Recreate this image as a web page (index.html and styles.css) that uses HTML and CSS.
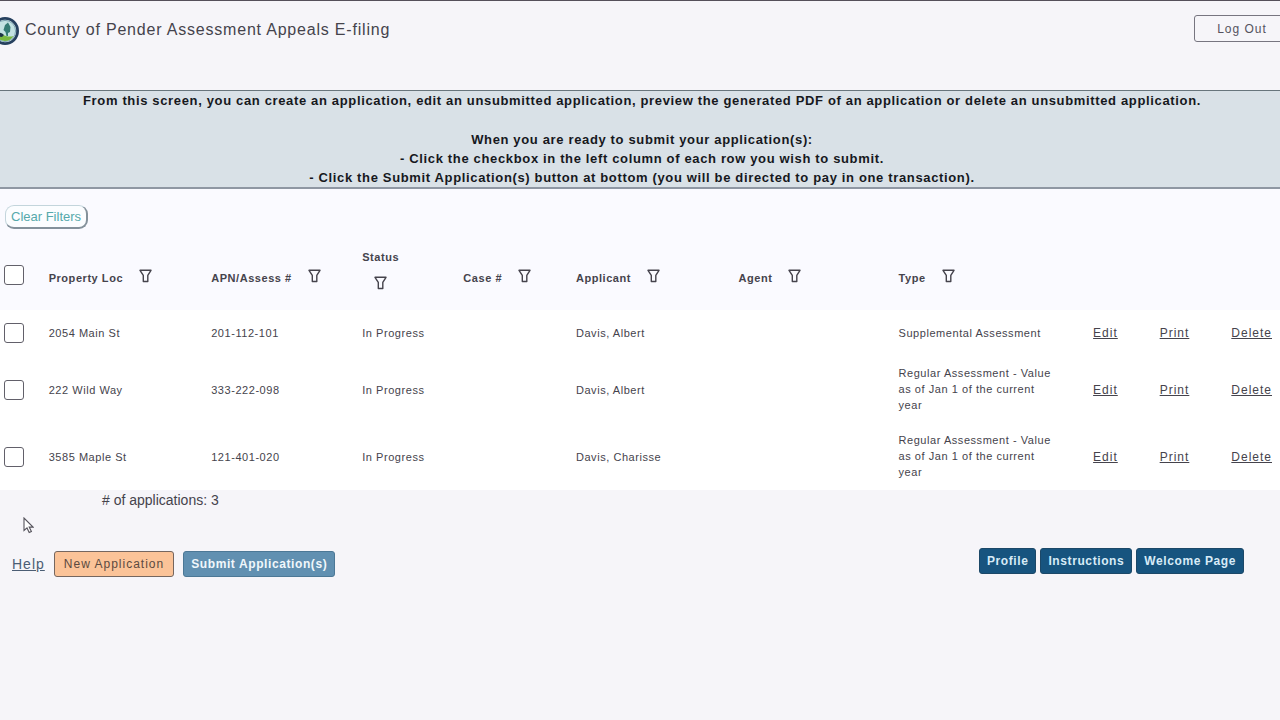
FILE: index.html
```html
<!DOCTYPE html>
<html lang="en">
<head>
    <meta charset="UTF-8">
    <meta name="viewport" content="width=device-width, initial-scale=1.0">
    <title>Assessment Appeals E-filing</title>
    <link rel="stylesheet" href="styles.css">
</head>
<body>
    <svg class="sprite" aria-hidden="true">
        <symbol id="funnel" viewBox="0 0 13 14">
            <path d="M1 1.300h11L8.800 6.400v6.100H4.300V6.400z" fill="none" stroke="currentColor" stroke-width="1.4" stroke-linejoin="round"/>
        </symbol>
    </svg>

    <header class="header">
        <svg class="logo" viewBox="0 0 28 28" aria-hidden="true">
            <circle cx="14" cy="14" r="12.6" fill="#dcefea" stroke="#26405f" stroke-width="2.8"/>
            <circle cx="14" cy="14" r="10.6" fill="#c3e2e2" stroke="#7fa5b4" stroke-width="1"/>
            <path d="M5 19q6-2 10 0q4 1 7.500 0q-3 5-8.500 5q-6-.2-9-5z" fill="#79b83f"/>
            <path d="M4 15.500q6-.5 9 2.500l-2 2q-4 0-6.500-2z" fill="#1d3545"/>
            <path d="M15.500 19l-1-4l-2-2l1.500-5l3-2.500l2.500 4.500l-.5 5l-2 1v3z" fill="#347b73"/>
        </svg>
        <h1>County of Pender Assessment Appeals E-filing</h1>
        <button type="button" class="logout">Log Out</button>
    </header>

    <section class="notice">
        <p>From this screen, you can create an application, edit an unsubmitted application, preview the generated PDF of an application or delete an unsubmitted application.</p>
        <p>When you are ready to submit your application(s):<br>
        - Click the checkbox in the left column of each row you wish to submit.<br>
        - Click the Submit Application(s) button at bottom (you will be directed to pay in one transaction).</p>
    </section>

    <main>
        <div class="filters">
            <button type="button" class="clear">Clear Filters</button>
        </div>

        <table>
            <colgroup>
                <col class="col-check">
                <col class="col-property">
                <col class="col-apn">
                <col class="col-status">
                <col class="col-case">
                <col class="col-applicant">
                <col class="col-agent">
                <col class="col-type">
                <col class="col-edit">
                <col class="col-print">
                <col class="col-delete">
            </colgroup>
            <thead>
                <tr>
                    <th><input type="checkbox" aria-label="Select all"></th>
                    <th><span class="head">Property Loc <svg class="funnel"><use href="#funnel"/></svg></span></th>
                    <th><span class="head">APN/Assess # <svg class="funnel"><use href="#funnel"/></svg></span></th>
                    <th><span class="head stacked">Status <svg class="funnel"><use href="#funnel"/></svg></span></th>
                    <th><span class="head">Case # <svg class="funnel"><use href="#funnel"/></svg></span></th>
                    <th><span class="head">Applicant <svg class="funnel"><use href="#funnel"/></svg></span></th>
                    <th><span class="head">Agent <svg class="funnel"><use href="#funnel"/></svg></span></th>
                    <th><span class="head">Type <svg class="funnel"><use href="#funnel"/></svg></span></th>
                    <th></th>
                    <th></th>
                    <th></th>
                </tr>
            </thead>
            <tbody>
                <tr>
                    <td><input type="checkbox" aria-label="Select 2054 Main St"></td>
                    <td>2054 Main St</td>
                    <td>201-112-101</td>
                    <td>In Progress</td>
                    <td></td>
                    <td>Davis, Albert</td>
                    <td></td>
                    <td class="type">Supplemental Assessment</td>
                    <td><a href="#">Edit</a></td>
                    <td><a href="#">Print</a></td>
                    <td><a href="#">Delete</a></td>
                </tr>
                <tr>
                    <td><input type="checkbox" aria-label="Select 222 Wild Way"></td>
                    <td>222 Wild Way</td>
                    <td>333-222-098</td>
                    <td>In Progress</td>
                    <td></td>
                    <td>Davis, Albert</td>
                    <td></td>
                    <td class="type">Regular Assessment - Value as of Jan 1 of the current year</td>
                    <td><a href="#">Edit</a></td>
                    <td><a href="#">Print</a></td>
                    <td><a href="#">Delete</a></td>
                </tr>
                <tr>
                    <td><input type="checkbox" aria-label="Select 3585 Maple St"></td>
                    <td>3585 Maple St</td>
                    <td>121-401-020</td>
                    <td>In Progress</td>
                    <td></td>
                    <td>Davis, Charisse</td>
                    <td></td>
                    <td class="type">Regular Assessment - Value as of Jan 1 of the current year</td>
                    <td><a href="#">Edit</a></td>
                    <td><a href="#">Print</a></td>
                    <td><a href="#">Delete</a></td>
                </tr>
            </tbody>
        </table>
        <p class="count"># of applications: 3</p>
    </main>

    <footer class="actions">
        <div class="left">
            <a href="#" class="help">Help</a>
            <button type="button" class="btn new">New Application</button>
            <button type="button" class="btn submit">Submit Application(s)</button>
        </div>
        <div class="right">
            <button type="button" class="btn nav">Profile</button>
            <button type="button" class="btn nav">Instructions</button>
            <button type="button" class="btn nav">Welcome Page</button>
        </div>
    </footer>

    <svg class="cursor" viewBox="0 0 11 17" aria-hidden="true">
        <path d="M1 1v12.500l3-2.600l2.200 4.600l2.200-1l-2.200-4.400h3.800z" fill="#fff" stroke="#55535c" stroke-width="1.100"/>
    </svg>
</body>
</html>
```
FILE: styles.css
```css
* {
    box-sizing: border-box;
    letter-spacing: 0.05em;
}
body {
    margin: 0;
    min-height: 100vh;
    border-top: 1px solid #55505a;
    background: #f6f5f9;
    color: #45434c;
    font-family: "Liberation Sans", Arial, sans-serif;
    font-size: 11px;
    line-height: 16px;
    overflow-x: hidden;
}
p {
    margin: 0;
}
button {
    font-family: inherit;
    cursor: pointer;
}
.sprite {
    display: none;
}

.header {
    display: flex;
    align-items: flex-start;
    height: 89px;
    margin: 0 -10px 0 -9px;
    padding-top: 14px;
}
.logo {
    width: 28px;
    height: 28px;
    margin-top: 2px;
}
h1 {
    flex: 1;
    margin: 3px 0 0 6px;
    font-size: 16px;
    line-height: 24px;
    font-weight: normal;
}
.logout {
    width: 96px;
    height: 27px;
    border: 1px solid #777580;
    border-radius: 3px;
    background: transparent;
    color: #55535e;
    font-size: 12px;
    letter-spacing: 1px;
}

.notice {
    padding-left: 4px;
    border-top: 1px solid #68757c;
    border-bottom: 2px solid #8f97a3;
    background: #d9e1e7;
    color: #16181d;
    font-size: 13px;
    line-height: 19px;
    font-weight: bold;
    text-align: center;
}
.notice p + p {
    margin-top: 20px;
}

main {
    background: #fafaff;
}
.filters {
    height: 50px;
    padding: 16px 5px 0;
}
.clear {
    height: 24px;
    padding: 0 5px;
    border: 1px solid #c3d5dc;
    border-right: 2px solid #84919b;
    border-bottom: 2px solid #84919b;
    border-radius: 9px;
    background: #fbfdff;
    color: #55a9ab;
    font-size: 13px;
    letter-spacing: normal;
}

table {
    width: 100%;
    table-layout: fixed;
    border-collapse: collapse;
}
.col-check { width: 3.8%; }
.col-property { width: 12.7%; }
.col-apn { width: 11.8%; }
.col-status { width: 7.9%; }
.col-case { width: 8.8%; }
.col-applicant { width: 12.7%; }
.col-agent { width: 12.5%; }
.col-type { width: 15.2%; }
.col-edit { width: 5.2%; }
.col-print { width: 5.6%; }
.col-delete { width: 3.8%; }
th,
td {
    padding: 0;
    text-align: left;
    white-space: nowrap;
}
thead tr {
    height: 71px;
}
tbody tr {
    height: 46px;
    background: #fff;
}
td.type {
    padding: 9px 36px 10px 0;
    white-space: normal;
}
.head {
    display: inline-flex;
    align-items: center;
    gap: 16px;
    padding-top: 7px;
    vertical-align: middle;
}
.head.stacked {
    flex-direction: column;
    gap: 11px;
    padding: 0 0 6px;
}
.funnel {
    width: 13px;
    height: 14px;
    margin-bottom: 4px;
}
input[type="checkbox"] {
    appearance: none;
    display: block;
    width: 20px;
    height: 20px;
    margin: 0 0 0 4px;
    border: 1px solid #62606a;
    border-radius: 3px;
    background: #fff;
}
input[type="checkbox"]:checked {
    background: #17547f;
}
td a {
    color: #45434c;
    font-size: 12px;
    letter-spacing: 1px;
}
.count {
    padding: 0 102px;
    background: #f6f5f9;
    font-size: 14px;
    line-height: 20px;
    letter-spacing: normal;
}

.actions {
    display: flex;
    justify-content: space-between;
    align-items: flex-start;
    padding: 38px 36px 0 12px;
}
.left,
.right {
    display: flex;
    align-items: center;
}
.left {
    gap: 9px;
    padding-top: 3px;
}
.right {
    gap: 4px;
}
.help {
    color: #4b5d74;
    font-size: 14px;
    letter-spacing: 1px;
}
.btn {
    height: 26px;
    padding: 0 7px;
    border: 1px solid #1c4868;
    border-radius: 3px;
    font-size: 12px;
}
.new {
    padding: 0 9px;
    border-color: #75665f;
    background: #fbc398;
    color: #5c4a40;
    letter-spacing: 1px;
}
.submit {
    border-color: #4c7896;
    background: #6190b1;
    color: #f0f7fb;
    font-weight: bold;
}
.nav {
    background: #17547f;
    color: #d7ebf7;
    font-weight: bold;
}

.cursor {
    position: absolute;
    left: 23px;
    top: 517px;
    width: 11px;
    height: 17px;
}
```
